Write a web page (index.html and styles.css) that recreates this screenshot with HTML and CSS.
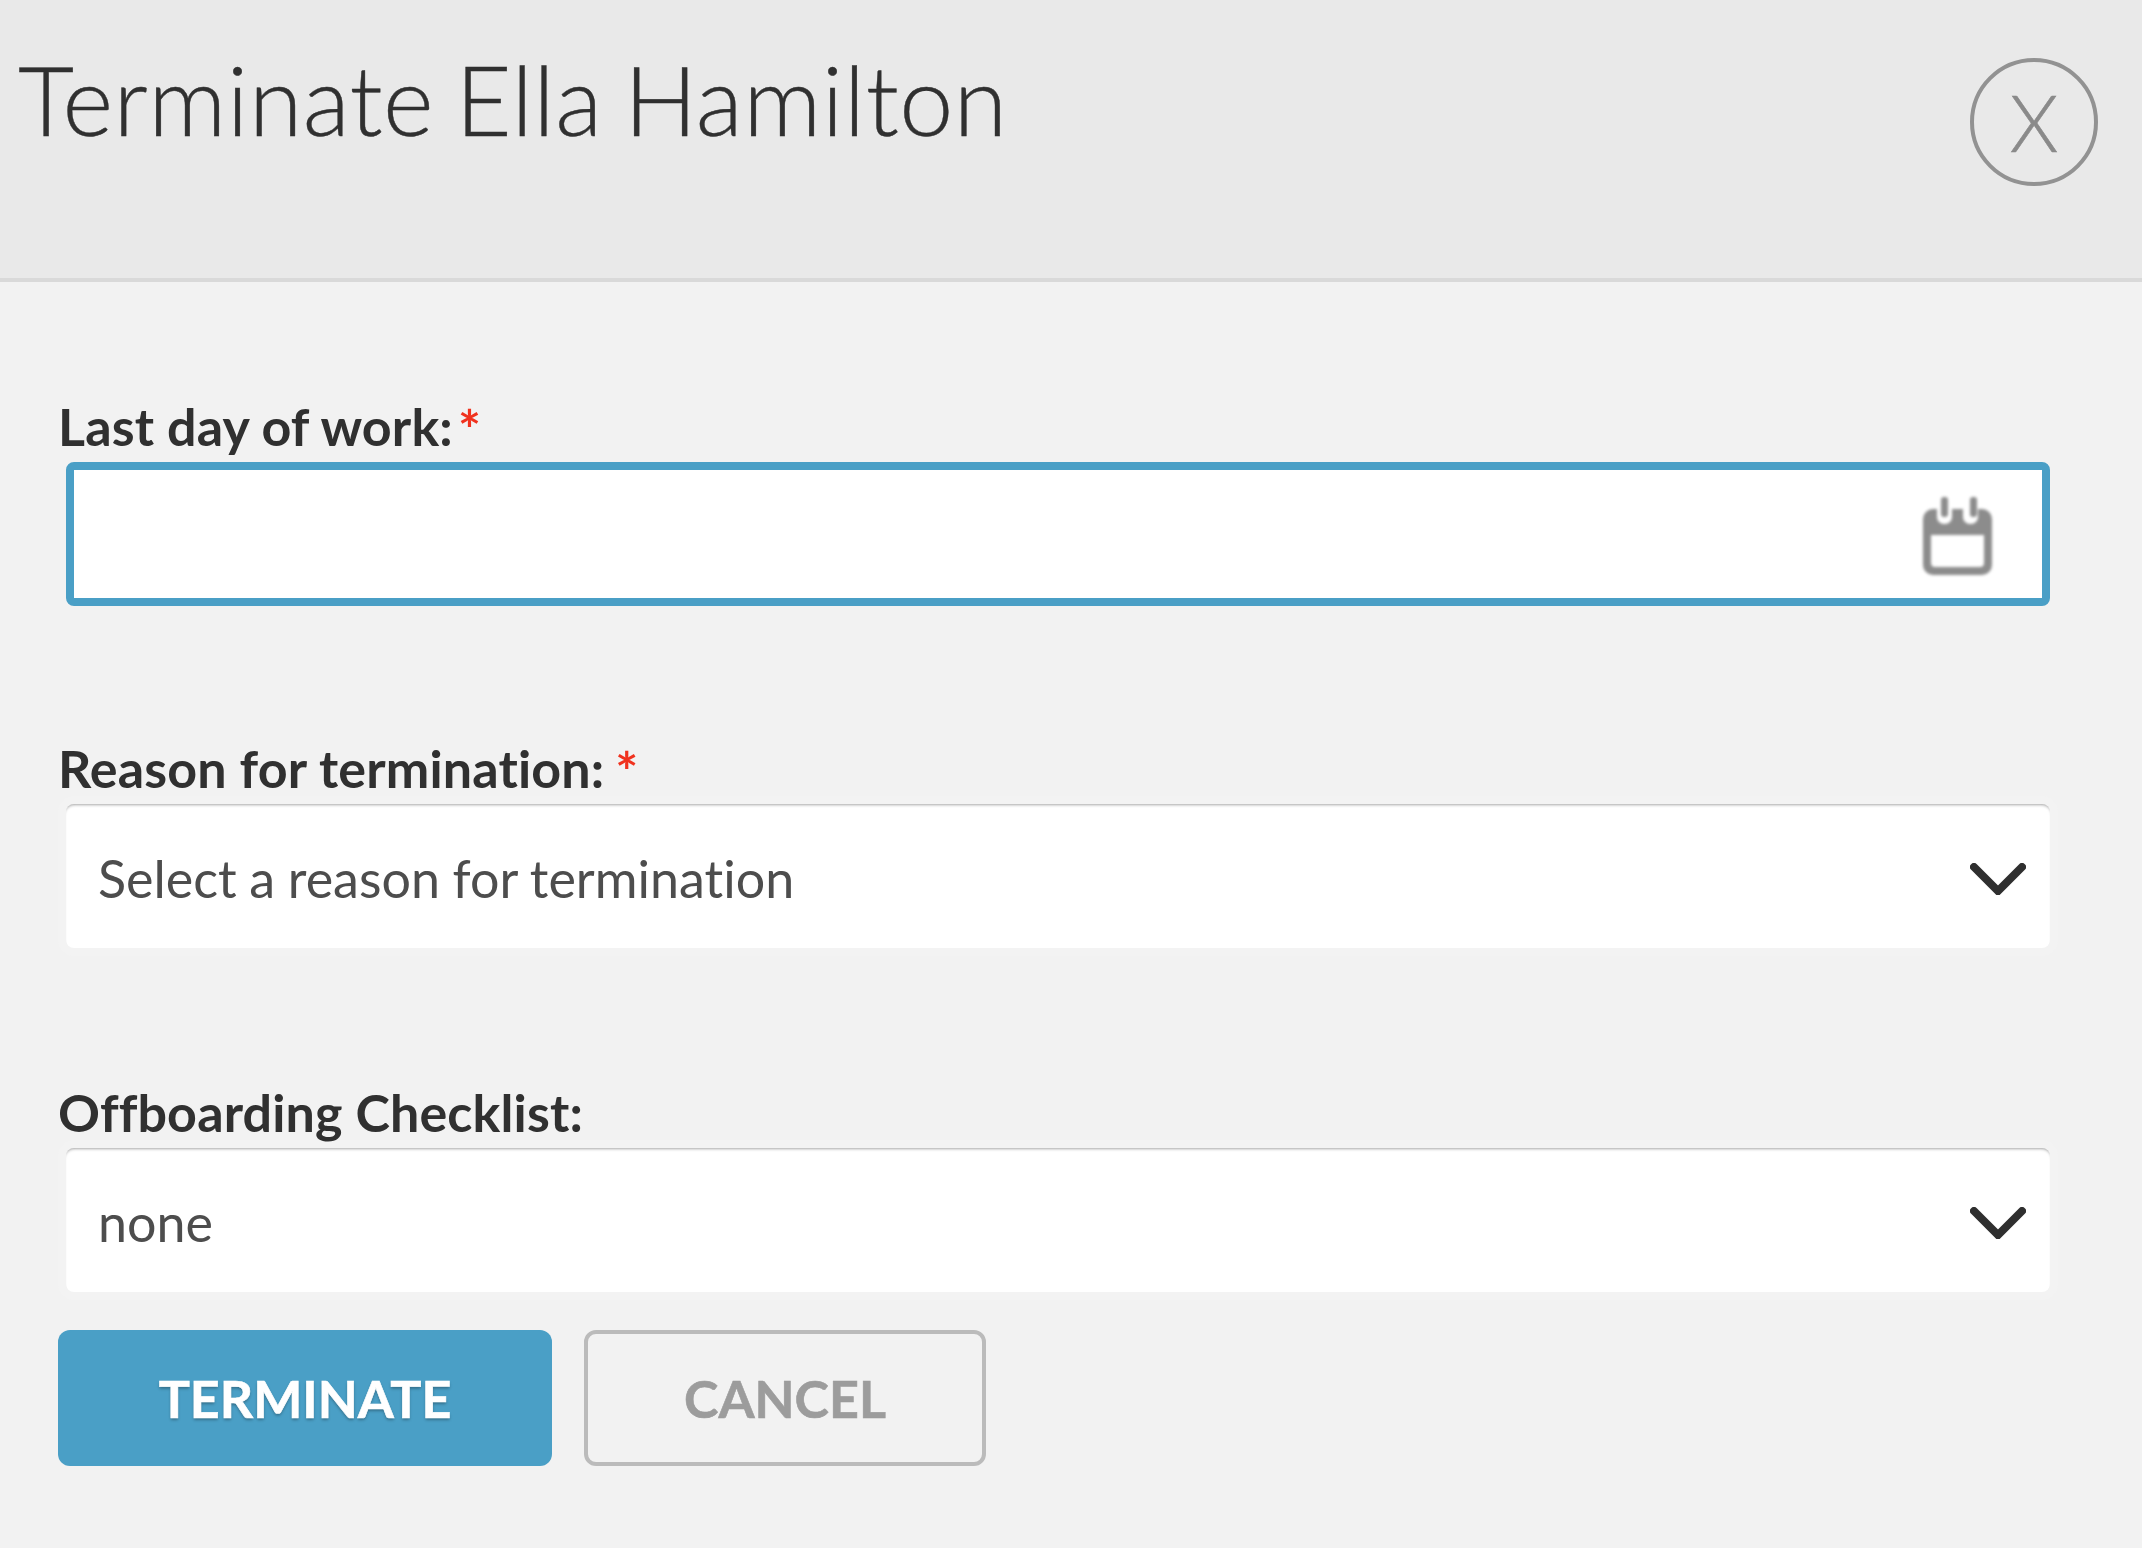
FILE: index.html
```html
<!DOCTYPE html>
<html lang="en">
  <head>
    <meta charset="UTF-8" />
    <meta name="viewport" content="width=device-width, initial-scale=1.0" />
    <title>Terminate Ella Hamilton</title>
    <link rel="stylesheet" href="styles.css">
  </head>
  <body>
    <!-- Modal header -->
    <header class="modal-header">
      <h1>Terminate Ella Hamilton</h1>
      <button class="close-btn" type="button">X</button>
    </header>

    <form class="modal-body">
      <div class="field field-date">
        <label>Last day of work:<span class="required">*</span></label>
        <div class="input input-focus">
          <svg class="calendar-icon" viewBox="0 0 69 78" width="69" height="78">
            <path fill="#8c8c8c" d="M10 12h4v8a7 7 0 0 0 7 7h1a7 7 0 0 0 7-7v-8h11v8a7 7 0 0 0 7 7h1a7 7 0 0 0 7-7v-8h4a10 10 0 0 1 10 10v46a10 10 0 0 1-10 10H10A10 10 0 0 1 0 68V22a10 10 0 0 1 10-10z M8 38v28a4 4 0 0 0 4 4h45a4 4 0 0 0 4-4V38z" fill-rule="evenodd" />
            <rect fill="#8c8c8c" x="18" y="0" width="7" height="20" rx="3" />
            <rect fill="#8c8c8c" x="47" y="0" width="7" height="20" rx="3" />
          </svg>
        </div>
      </div>

      <div class="field field-reason">
        <label>Reason for termination:<span class="required">*</span></label>
        <div class="input input-select">
          <span>Select a reason for termination</span>
          <svg class="chevron" viewBox="0 0 56 32" width="56" height="32">
            <path d="M4 4l24 24L52 4" fill="none" stroke="#2f2f2f" stroke-width="8" stroke-linecap="round" stroke-linejoin="miter" />
          </svg>
        </div>
      </div>

      <div class="field field-checklist">
        <label>Offboarding Checklist:</label>
        <div class="input input-select">
          <span>none</span>
          <svg class="chevron" viewBox="0 0 56 32" width="56" height="32">
            <path d="M4 4l24 24L52 4" fill="none" stroke="#2f2f2f" stroke-width="8" stroke-linecap="round" stroke-linejoin="miter" />
          </svg>
        </div>
      </div>

      <div class="actions">
        <button class="btn btn-primary" type="button">TERMINATE</button>
        <button class="btn btn-cancel" type="button">CANCEL</button>
      </div>
    </form>
  </body>
</html>
```

FILE: styles.css
```css
* {
  box-sizing: border-box;
}

html,
body {
  margin: 0;
  height: 100%;
}

body {
  background: #f2f2f2;
  color: #303030;
  font-family: Lato, "Open Sans", sans-serif;
  font-variant-ligatures: none;
}

.modal-header {
  display: flex;
  justify-content: space-between;
  align-items: flex-start;
  height: 282px;
  padding: 58px 44px 0 18px;
  background: #e9e9e9;
  border-bottom: 4px solid #d9d9d9;
}

.modal-header h1 {
  margin: -4px 0 0;
  font-size: 97px;
  font-weight: 300;
  line-height: 90px;
  letter-spacing: 0.45px;
  word-spacing: -5.5px;
  color: #303030;
  -webkit-text-stroke: 0.4px #303030;
}

.close-btn {
  width: 128px;
  height: 128px;
  padding: 0;
  border: 4px solid #929292;
  border-radius: 50%;
  background: none;
  color: #8a8a8a;
  font-family: Lato, sans-serif;
  font-size: 78px;
  font-weight: 300;
  line-height: 1;
  -webkit-text-stroke: 0.6px #8a8a8a;
}

.modal-body {
  padding: 0 92px 0 58px;
}

.field label {
  display: block;
  font-size: 52px;
  font-weight: 700;
  line-height: 48px;
  height: 60px;
  letter-spacing: 0.15px;
}

.field-date {
  padding-top: 120px;
}

.field-date .required {
  margin-left: 5px;
}

.field-reason {
  padding-top: 138px;
}

.field-checklist {
  padding-top: 140px;
}

.required {
  position: relative;
  top: 3px;
  margin-left: 11px;
  color: #f0321e;
  font-weight: 700;
  font-size: 54px;
  line-height: 0;
}

.input {
  display: flex;
  align-items: center;
  justify-content: space-between;
  height: 144px;
  margin-left: 8px;
  border-radius: 8px;
  background: #fff;
}

.input-focus {
  border: 8px solid #4a9fc6;
  padding-right: 50px;
  justify-content: flex-end;
}

.input-select {
  padding: 0 24px 0 32px;
  color: #4d4d4d;
  font-size: 52px;
  word-spacing: -0.7px;
  box-shadow: inset 0 3px 3px -2px rgba(0, 0, 0, 0.35), 0 0 0 8px #f3f3f3;
}

.input-select span {
  position: relative;
  top: 2px;
}

.calendar-icon {
  margin-top: 4px;
  filter: blur(1.5px);
}

.chevron {
  margin-top: 6px;
}

.actions {
  display: flex;
  gap: 32px;
  padding-top: 38px;
}

.btn {
  height: 136px;
  border-radius: 12px;
  font-family: Lato, sans-serif;
  font-size: 52px;
  font-weight: 700;
  padding: 0;
}

.btn-primary {
  width: 494px;
  border: none;
  background: #4a9fc6;
  color: #fff;
  text-shadow: 0 2px 3px rgba(0, 0, 0, 0.3);
  -webkit-text-stroke: 0.6px #fff;
}

.btn-cancel {
  width: 402px;
  border: 4px solid #bbb;
  background: none;
  color: #9c9c9c;
  -webkit-text-stroke: 0.6px #9c9c9c;
}
```
